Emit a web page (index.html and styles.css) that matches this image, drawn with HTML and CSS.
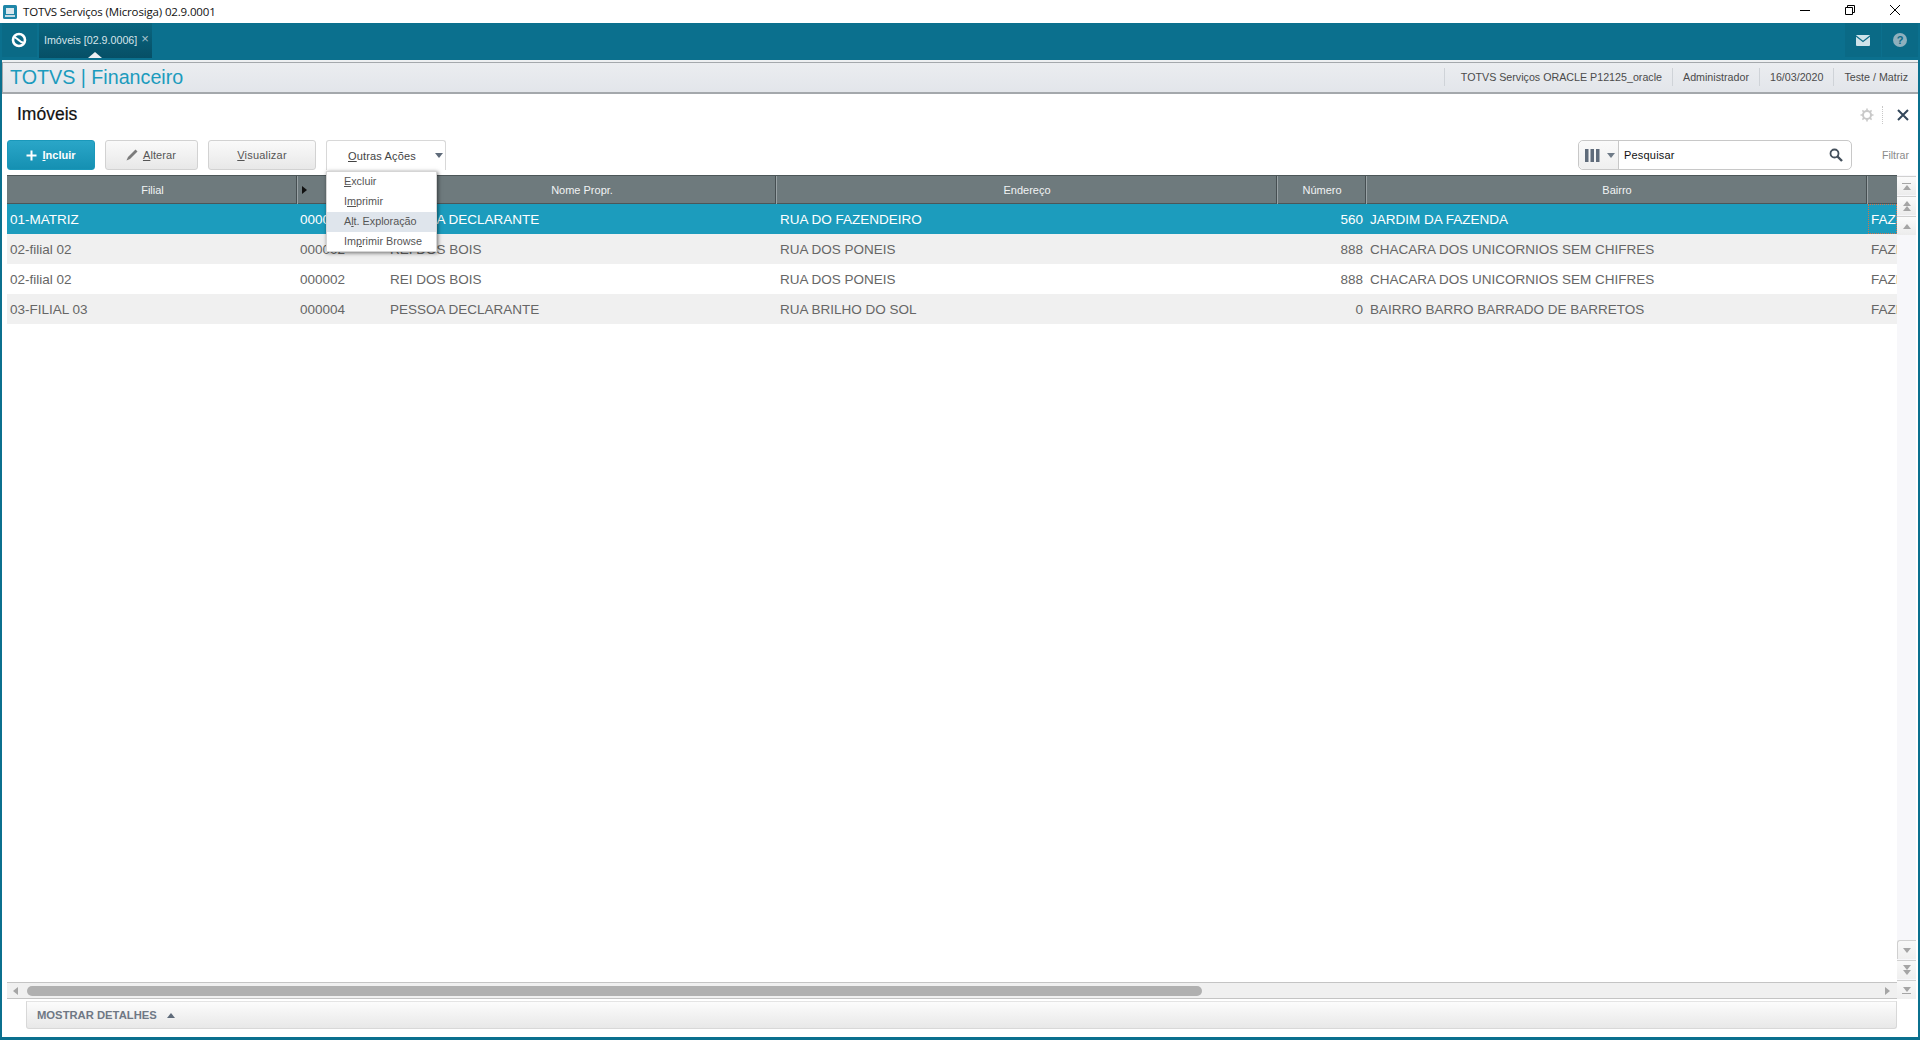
FILE: index.html
```html
<!DOCTYPE html>
<html lang="pt-BR">
<head>
<meta charset="utf-8">
<title>TOTVS Serviços (Microsiga) 02.9.0001</title>
<link rel="stylesheet" href="styles.css">
</head>
<body>
<div class="window">
  <header class="titlebar">
    <svg class="app-icon" width="14" height="14" viewBox="0 0 14 14"><rect width="14" height="14" rx="1.5" fill="#1f86a8"/><path d="M3 3H11V9H3Z" fill="#dbe8ee"/><path d="M2 10H12V12H2Z" fill="#c5dbe4"/></svg>
    <span class="app-title">TOTVS Serviços (Microsiga) 02.9.0001</span>
    <div class="winctl">
      <svg width="14" height="14" viewBox="0 0 14 14"><path d="M2 7.5H12" stroke="#000" fill="none"/></svg>
      <svg width="14" height="14" viewBox="0 0 14 14"><path d="M2.5 4.5H9.5V11.5H2.5ZM4.5 4.5V2.5H11.5V9.5H9.5" stroke="#000" fill="none"/></svg>
      <svg width="14" height="14" viewBox="0 0 14 14"><path d="M2 2L12 12M12 2L2 12" stroke="#000" fill="none"/></svg>
    </div>
  </header>
  <div class="frame">
    <nav class="tabbar">
      <div class="home">
        <svg width="18" height="18" viewBox="0 0 18 18"><circle cx="9" cy="9" r="6" fill="none" stroke="#fff" stroke-width="2.6"/><path d="M4.5 6.5C7 6 10 12 13.5 11.5" fill="none" stroke="#fff" stroke-width="2.2"/></svg>
      </div>
      <div class="tab"><span class="tab-text">Imóveis [02.9.0006]</span><span class="tab-x">×</span><i class="tab-caret"></i></div>
      <div class="tabbar-right">
        <div class="tb-btn"><svg width="14" height="11" viewBox="0 0 14 11"><rect width="14" height="11" rx="1" fill="#cfe3ea"/><path d="M0 1L7 6.5L14 1" fill="none" stroke="#0b6a86" stroke-width="1.2"/></svg></div>
        <div class="tb-btn"><svg width="14" height="14" viewBox="0 0 14 14"><circle cx="7" cy="7" r="7" fill="#8fb0bd"/><text class="help-q" x="7" y="11" text-anchor="middle">?</text></svg></div>
      </div>
    </nav>
    <div class="module">
      <div class="brand">TOTVS | Financeiro</div>
      <div class="infos">
        <span class="info first">TOTVS Serviços ORACLE P12125_oracle</span>
        <span class="info">Administrador</span>
        <span class="info">16/03/2020</span>
        <span class="info last">Teste / Matriz</span>
      </div>
    </div>
    <div class="titlerow">
      <h1>Imóveis</h1>
      <div class="titleicons">
        <svg width="14" height="14" viewBox="0 0 14 14"><circle cx="7" cy="7" r="4" fill="none" stroke="#c9c9c9" stroke-width="2"/><path d="M7 0.5V3M7 11V13.5M0.5 7H3M11 7H13.5M2.4 2.4L4 4M10 10L11.6 11.6M11.6 2.4L10 4M4 10L2.4 11.6" stroke="#c9c9c9" stroke-width="1.6"/></svg>
        <i class="dotsep"></i>
        <svg width="12" height="12" viewBox="0 0 12 12"><path d="M1 1L11 11M11 1L1 11" stroke="#33475b" stroke-width="2"/></svg>
      </div>
    </div>
    <div class="toolbar">
      <button class="btn primary"><svg width="11" height="11" viewBox="0 0 11 11"><path d="M5.5 0.5V10.5M0.5 5.5H10.5" stroke="#fff" stroke-width="2"/></svg><span><u>I</u>ncluir</span></button>
      <button class="btn w-alterar"><svg width="12" height="12" viewBox="0 0 12 12"><path d="M0.5 11.5L2 8L9.5 0.5L11.5 2.5L4 10Z" fill="#7b7b7b"/></svg><span><u>A</u>lterar</span></button>
      <button class="btn w-visualizar"><span><u>V</u>isualizar</span></button>
      <div class="others">
        <button class="others-btn"><span><u>O</u>utras Ações</span><i class="others-caret"></i></button>
        <ul class="menu">
          <li><u>E</u>xcluir</li>
          <li>I<u>m</u>primir</li>
          <li class="active">A<u>l</u>t. Exploração</li>
          <li>Im<u>p</u>rimir Browse</li>
        </ul>
      </div>
      <div class="search">
        <div class="search-cols">
          <svg width="15" height="13" viewBox="0 0 15 13"><path d="M0 0H3.5V13H0ZM5.5 0H9V13H5.5ZM11 0H14.5V13H11Z" fill="#5f6b7a"/></svg>
          <i class="caret-sm"></i>
        </div>
        <span class="search-text">Pesquisar</span>
        <svg class="search-icon" width="14" height="14" viewBox="0 0 14 14"><circle cx="5.5" cy="5.5" r="4" fill="none" stroke="#44505c" stroke-width="1.8"/><path d="M8.5 8.5L13 13" stroke="#44505c" stroke-width="2.4"/></svg>
      </div>
      <span class="filter">Filtrar</span>
    </div>
    <div class="workarea">
      <section class="grid-wrap">
        <div class="grid">
          <div class="row head">
            <div class="c c1">Filial</div>
            <div class="c c2 sortcell"><i class="sort"></i></div>
            <div class="c c3">Nome Propr.</div>
            <div class="c c4">Endereço</div>
            <div class="c c5">Número</div>
            <div class="c c6">Bairro</div>
            <div class="c c7"></div>
          </div>
          <div class="row sel">
            <div class="c c1">01-MATRIZ</div><div class="c c2">000001</div><div class="c c3">PESSOA DECLARANTE</div><div class="c c4">RUA DO FAZENDEIRO</div><div class="c c5">560</div><div class="c c6">JARDIM DA FAZENDA</div><div class="c c7 focus">FAZENDA</div>
          </div>
          <div class="row alt">
            <div class="c c1">02-filial 02</div><div class="c c2">000002</div><div class="c c3">REI DOS BOIS</div><div class="c c4">RUA DOS PONEIS</div><div class="c c5">888</div><div class="c c6">CHACARA DOS UNICORNIOS SEM CHIFRES</div><div class="c c7">FAZENDA</div>
          </div>
          <div class="row">
            <div class="c c1">02-filial 02</div><div class="c c2">000002</div><div class="c c3">REI DOS BOIS</div><div class="c c4">RUA DOS PONEIS</div><div class="c c5">888</div><div class="c c6">CHACARA DOS UNICORNIOS SEM CHIFRES</div><div class="c c7">FAZENDA</div>
          </div>
          <div class="row alt">
            <div class="c c1">03-FILIAL 03</div><div class="c c2">000004</div><div class="c c3">PESSOA DECLARANTE</div><div class="c c4">RUA BRILHO DO SOL</div><div class="c c5">0</div><div class="c c6">BAIRRO BARRO BARRADO DE BARRETOS</div><div class="c c7">FAZENDA</div>
          </div>
        </div>
        <div class="hscroll">
          <i class="arrow-left"></i>
          <div class="thumb-track"><div class="thumb"></div></div>
          <i class="arrow-right"></i>
        </div>
      </section>
      <aside class="vscroll">
        <div class="vgroup">
          <div class="vbtn"><i class="bar top"></i><i class="up"></i></div>
          <div class="vbtn"><i class="up stack"></i><i class="up"></i></div>
          <div class="vbtn"><i class="up"></i></div>
        </div>
        <div class="vgroup bottom">
          <div class="vbtn"><i class="down"></i></div>
          <div class="vbtn"><i class="down stack"></i><i class="down"></i></div>
          <div class="vbtn"><i class="down"></i><i class="bar bot"></i></div>
        </div>
      </aside>
    </div>
    <footer class="details-row">
      <div class="details"><span>MOSTRAR DETALHES</span><i class="details-caret"></i></div>
    </footer>
  </div>
</div>
</body>
</html>
```
FILE: styles.css
```css
* { box-sizing: border-box; }
html, body { margin: 0; height: 100%; overflow: hidden; }
body { font-family: "Liberation Sans", Arial, sans-serif; background: #fff; }
.window { height: 1040px; display: flex; flex-direction: column; }

.titlebar { height: 23px; flex: none; display: flex; align-items: center; padding-left: 3px; background: #fff; }
.app-icon { margin-right: 6px; }
.app-title { font: 11.5px "Open Sans", "Noto Sans", sans-serif; color: #111; letter-spacing: -.15px; }
.winctl { margin-left: auto; display: flex; gap: 31px; padding-right: 18px; margin-top: -3px; }

.frame { flex: 1; min-height: 0; display: flex; flex-direction: column; border: solid #0b708e; border-width: 0 2px 3px; background: #fff; }

.tabbar { height: 37px; flex: none; display: flex; background: #0b708e; }
.home { width: 35px; margin-bottom: 3px; padding-right: 2px; display: flex; align-items: center; justify-content: center; background: #0a6a86; }
.tab { width: 113px; margin: 0 0 2px 2px; position: relative; display: flex; align-items: center; padding: 0 0 1px 5px; gap: 4px; background: linear-gradient(#0a6680, #064f66); color: #d6e4ea; font-size: 10.7px; }
.tab-text { white-space: nowrap; }
.tab-x { color: #a8c4cf; font-size: 13px; margin-top: -4px; }
.tab-caret { position: absolute; left: 49px; bottom: 0; border: solid transparent; border-width: 0 7px 6px; border-bottom-color: #eef0f3; }
.tabbar-right { margin-left: auto; display: flex; gap: 1px; }
.tb-btn { width: 36px; margin-bottom: 3px; display: flex; align-items: center; justify-content: center; background: #0a6a86; }
.help-q { font: bold 11px "Liberation Sans", sans-serif; fill: #0a6a86; }

.module { height: 34px; flex: none; display: flex; align-items: center; justify-content: space-between; padding: 1px 0 0 8px; background: linear-gradient(#eceef1, #e2e5ea); box-shadow: inset 0 2px 0 #eef0f2, inset 0 3px 0 #a4a8ac, inset 1px 0 0 #a4a8ac, inset 0 -2px 0 #a4a8ac; }
.brand { font-size: 19.7px; color: #1c9bbd; }
.infos { display: flex; align-items: center; height: 18px; margin-top: -2px; }
.info { font-size: 10.7px; color: #4b4b4b; padding: 0 10px; height: 18px; line-height: 18px; border-left: 1px solid #cfd3d8; }
.info.first { padding-left: 16px; }
.info.last { padding-right: 10px; }

.titlerow { height: 46px; flex: none; display: flex; align-items: center; justify-content: space-between; padding: 0 9px 5px 15px; }
h1 { margin: 0; font-size: 17.5px; font-weight: 400; color: #111; -webkit-text-stroke: .2px #111; }
.titleicons { display: flex; align-items: center; gap: 10px; }
.dotsep { width: 0; height: 18px; border-left: 1px dotted #c8c8c8; margin-left: -2px; margin-right: 4px; }

.toolbar { height: 30px; flex: none; display: flex; align-items: stretch; padding: 0 5px; }
.btn { height: 30px; width: 93px; margin-right: 10px; padding: 0; display: flex; align-items: center; justify-content: center; gap: 5px; font: 11px "Liberation Sans", sans-serif; color: #555; background: linear-gradient(#fafafa, #e8e8e8); border: 1px solid #d2d2d2; border-radius: 3px; letter-spacing: .2px; }
.btn.primary { width: 88px; color: #fff; font-weight: 700; letter-spacing: 0; background: linear-gradient(#2aa6c8, #1590b2); border-color: #1a98ba; margin-right: 10px; }
.btn.w-alterar { padding-right: 1px; letter-spacing: .1px; }
.btn.w-visualizar { width: 108px; }
.others { width: 120px; position: relative; }
.others-btn { width: 120px; height: 30px; padding: 1px 0 0 0; display: flex; align-items: center; justify-content: flex-start; font: 11px "Liberation Sans", sans-serif; color: #444; background: #fff; border: 1px solid #d8d8d8; border-bottom: 0; border-radius: 3px 3px 0 0; letter-spacing: .15px; }
.others-btn span { margin-left: 21px; }
.others-caret { margin-left: auto; margin-right: 2px; margin-top: -2px; border: solid transparent; border-width: 5px 4px 0; border-top-color: #5f6b7a; width: 0; height: 0; }
.menu { position: absolute; z-index: 5; left: 0; top: 31px; width: 111px; height: 81px; margin: 0; padding: 0; list-style: none; background: #fff; border: 1px solid #d5d5d5; box-shadow: 1px 1px 4px rgba(0,0,0,.55); }
.menu li { height: 20px; line-height: 18px; padding-left: 17px; font-size: 10.8px; color: #555; }
.menu li.active { background: #dfe5ec; }

.search { margin-left: auto; width: 274px; height: 30px; display: flex; align-items: center; border: 1px solid #c8c8c8; border-radius: 5px; background: #fff; }
.search-cols { width: 40px; height: 28px; display: flex; align-items: center; gap: 7px; padding-left: 6px; border-right: 1px solid #c8c8c8; background: linear-gradient(#fafafa, #efefef); border-radius: 5px 0 0 5px; }
.caret-sm { border: solid transparent; border-width: 5px 4px 0; border-top-color: #6f7b88; }
.search-text { font-size: 11px; color: #111; margin-left: 5px; letter-spacing: .2px; }
.search-icon { margin-left: auto; margin-right: 8px; }
.filter { width: 61px; text-align: right; font-size: 10.6px; line-height: 30px; color: #8a8a8a; padding-right: 4px; }

.workarea { flex: 1; min-height: 0; display: flex; padding: 5px 2px 0 5px; }
.grid-wrap { flex: 1; min-width: 0; display: flex; flex-direction: column; }
.grid { flex: 1; min-height: 0; overflow: hidden; }
.row { display: grid; grid-template-columns: 291px 90px 389px 501px 89px 501px 29px; height: 30px; align-items: center; font-size: 13.5px; color: #666; background: #fff; }
.c { white-space: nowrap; overflow: hidden; padding-left: 3px; height: 100%; line-height: 31px; }
.c2, .c3 { padding-left: 2px; }
.c5 { text-align: right; padding-right: 4px; }
.row.alt { background: #f0f0f0; }
.row.sel { background: #1c9cbd; color: #fff; }
.row.head { grid-template-columns: 290px 90px 389px 501px 89px 501px 30px; height: 29px; background: #6e7a7d; color: #f1f3f4; font-size: 11px; text-align: center; border: solid #4c5658; border-width: 1px 0; }
.row.head .c { line-height: 28px; text-align: center; border-right: 1px solid #464f52; box-shadow: 1px 0 0 #9aa3a6; padding: 0 0 0 2px; overflow: visible; }
.row.head .c7 { border-right: 0; box-shadow: none; }
.row.head .sortcell { display: flex; align-items: center; padding-left: 5px; }
.sort { border: solid transparent; border-width: 4px 0 4px 5px; border-left-color: #111; }
.focus { outline: 1px dotted #d0734e; outline-offset: -1px; }

.hscroll { height: 17px; flex: none; display: flex; align-items: center; background: #f0f0f0; border: solid #c4c4c4; border-width: 1px 0; }
.arrow-left { margin-left: 6px; border: solid transparent; border-width: 4px 5px 4px 0; border-right-color: #a5a5a5; }
.thumb-track { flex: 1; padding-left: 9px; }
.thumb { width: 1175px; height: 10px; background: #b0b0b0; border-radius: 5px; }
.arrow-right { margin-right: 7px; border: solid transparent; border-width: 4px 0 4px 5px; border-left-color: #a5a5a5; }

.vscroll { width: 19px; flex: none; display: flex; flex-direction: column; justify-content: space-between; background: #f7f7fa; padding-top: 1px; }
.vgroup { display: flex; flex-direction: column; gap: 1px; }
.vbtn { height: 19px; display: flex; flex-direction: column; align-items: center; justify-content: center; gap: 1px; background: linear-gradient(#fbfbfb, #ececec); border-top: 1px solid #d0d0d0; }
.vgroup.bottom .vbtn { background: linear-gradient(#f8f8f8, #efefef); }
.vgroup.bottom .vbtn:first-child { border-left: 1px solid #d0d0d0; border-radius: 3px 0 0 0; }
.up { border: solid transparent; border-width: 0 4px 5px; border-bottom-color: #a5a5a5; display: block; }
.down { border: solid transparent; border-width: 5px 4px 0; border-top-color: #a5a5a5; display: block; }
.bar { width: 9px; height: 1px; background: #a5a5a5; display: block; }
.stack { margin-bottom: -1px; }

.details-row { height: 38px; flex: none; padding: 2px 21px 8px 24px; }
.details { height: 28px; display: flex; align-items: center; gap: 10px; padding-left: 10px; background: linear-gradient(#fcfcfc, #e8e8e8); border: 1px solid #d8d8d8; border-top-color: #e4e4e4; border-radius: 0 0 3px 3px; font-size: 11.25px; font-weight: 700; color: #6f7885; }
.details-caret { border: solid transparent; border-width: 0 4px 5px; border-bottom-color: #5f6b7a; }
```
